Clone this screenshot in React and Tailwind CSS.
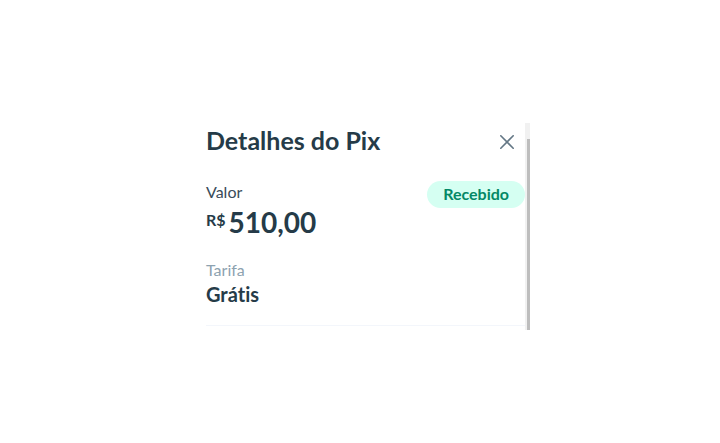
import { useState } from 'react';

function CloseIcon() {
  return (
    <svg width="14" height="14" viewBox="0 0 14 14" fill="none" stroke="currentColor" strokeWidth="1.6" strokeLinecap="round" aria-hidden="true">
      <path d="M0.8 0.8l12.4 12.4M13.2 0.8L0.8 13.2" />
    </svg>
  );
}

function PixDetails({ onClose }) {
  return (
    <section aria-labelledby="pix-title" className="flex w-full max-w-[324px]">
      <div className="min-w-0 flex-1 border-b-4 border-transparent">
        <header className="flex items-center justify-between pt-[3px] pr-[11px]">
          <h1 id="pix-title" className="text-[25px] leading-7 font-bold">Detalhes do Pix</h1>
          <button type="button" onClick={onClose} aria-label="Fechar" className="mt-1 text-[#647785]">
            <CloseIcon />
          </button>
        </header>

        <div className="flex items-start justify-between pt-[27px]">
          <dl>
            <dt className="text-[16px] leading-[22px] text-[#3a4c59]">Valor</dt>
            <dd className="flex items-start gap-[3px] pt-px font-bold">
              <span className="pt-1.5 text-[16px] leading-5">R$</span>
              <span className="text-[28px] leading-9">510,00</span>
            </dd>
          </dl>
          <span className="flex h-[27px] items-center rounded-full bg-[#d5fff2] px-4 pb-0.5 text-[16px] font-bold text-[#038866]">
            Recebido
          </span>
        </div>

        <dl className="border-b border-[#f3f6fb] pt-[19px] pb-[18px]">
          <dt className="text-[16px] leading-[22px] text-[#8da2b0]">Tarifa</dt>
          <dd className="text-[20px] leading-[26px] font-bold">Grátis</dd>
        </dl>
      </div>

      {/* Scroll track */}
      <div className="w-[5px] shrink-0 bg-[#f1f1f1] pt-4">
        <div className="ml-auto h-full w-[3px] bg-[#bdbdbd]" />
      </div>
    </section>
  );
}

export default function App() {
  const [open, setOpen] = useState(true);

  return (
    <main className="flex min-h-screen items-center justify-center bg-white pt-2.5 pl-4 font-['Lato',sans-serif] text-[#253b48] [font-variant-ligatures:none]">
      {open && <PixDetails onClose={() => setOpen(false)} />}
    </main>
  );
}
